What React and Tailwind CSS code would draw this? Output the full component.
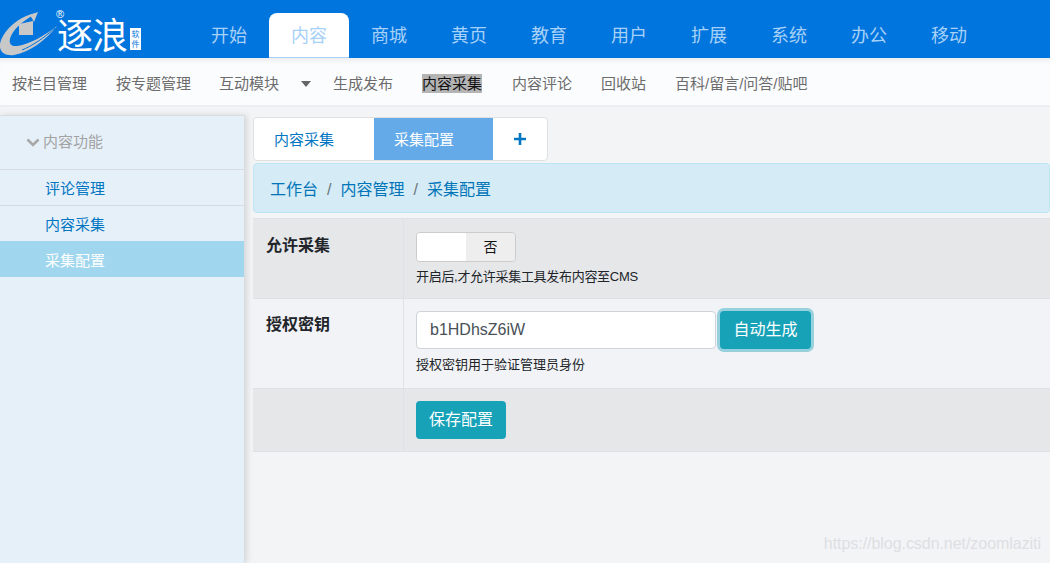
const topNav = ['开始', '内容', '商城', '黄页', '教育', '用户', '扩展', '系统', '办公', '移动'];

const subNav = [
  { label: '按栏目管理', w: 'w-[104px]' },
  { label: '按专题管理', w: 'w-[103px]' },
  { label: '互动模块', w: 'w-[82px]' },
  { caret: true, w: 'w-[32px]' },
  { label: '生成发布', w: 'w-[89px]' },
  { label: '内容采集', w: 'w-[90px]', selected: true },
  { label: '内容评论', w: 'w-[89px]' },
  { label: '回收站', w: 'w-[74px]' },
  { label: '百科/留言/问答/贴吧', w: 'w-[150px]' },
];

function Logo() {
  return (
    <div className="relative flex h-[58px] w-[149px] shrink-0 items-start">
      <svg width="58" height="58" viewBox="0 0 58 58" className="shrink-0">
        <path d="M37 13 C20 15 3 30 0 44 C-1 53 6 56 14 55 C30 52 46 40 57 26 C44 36 28 45 17 46 C9 47 8 41 12 34 C16 27 24 20 37 13 Z" fill="#c8c8c8" />
        <path d="M19 24 L33 21 L33 35 L19 35 Z" fill="#c8c8c8" />
        <path d="M22 50 C32 46 44 38 55 28" fill="none" stroke="#0075de" strokeWidth="1" />
        <path d="M30 15 L38 12 L34 22 Z" fill="#c8c8c8" />
      </svg>
      <span className="ml-[-1px] mt-[18px] text-[36px] leading-[30px] tracking-[-1px] text-white font-['Noto_Sans_CJK_SC',sans-serif]">逐浪</span>
      <span className="absolute left-[130px] top-[28px] flex h-[22px] w-[11px] flex-col items-center justify-center bg-white text-[8px] leading-[10px] text-[#0075de] font-['Noto_Sans_CJK_SC',sans-serif]">
        <span>软</span>
        <span>件</span>
      </span>
      <span className="absolute left-[56px] top-[9px] text-[11px] leading-[11px] text-white font-['Liberation_Sans',sans-serif]">®</span>
    </div>
  );
}

function App() {
  return (
    <div className="relative flex h-[563px] w-[1050px] flex-col overflow-hidden bg-[#f3f4f6] font-['Liberation_Sans','Noto_Sans_CJK_SC',sans-serif]">
      <header className="flex h-[58px] shrink-0 bg-[#0075de]">
        <Logo />
        <nav className="flex items-end pl-[40px]">
          {topNav.map((item) => (
            <a
              key={item}
              className={`flex h-[45px] w-[80px] items-center justify-center rounded-t-[8px] pt-[2px] text-[18px] text-[#a8d1f7] ${item === '内容' ? 'border-b border-[#a8d1f7] bg-white' : ''}`}
            >
              {item}
            </a>
          ))}
        </nav>
      </header>

      <div className="flex h-[49px] shrink-0 items-center border-b-2 border-[#eceef1] bg-[#fbfcfe] pl-[12px] pt-[5px] text-[15px] text-[#6c6c6c] shadow-[inset_0_6px_6px_-4px_rgba(0,0,0,0.08)]">
        {subNav.map((item, i) => (
          <div key={i} className={`${item.w} shrink-0`}>
            {item.caret ? (
              <span className="block h-0 w-0 border-x-[5px] border-t-[6px] border-x-transparent border-t-[#666]" />
            ) : item.selected ? (
              <span className="bg-[#b4b4b4] py-[1px] text-[#111]">{item.label}</span>
            ) : (
              item.label
            )}
          </div>
        ))}
      </div>

      <div className="flex min-h-0 flex-1">
        <aside className="mt-[8px] w-[245px] shrink-0 border-t border-r border-[#d9dde2] bg-[#e6f0f9] shadow-[2px_0_6px_rgba(0,0,0,0.12)]">
          <div className="flex h-[54px] items-center border-b border-[#d5dbe1] pl-[25px] text-[15px] text-[#a3a3a3]">
            <svg width="16" height="16" viewBox="0 0 16 16" className="mr-[2px]">
              <path d="M2.5 4.5 L8 10 L13.5 4.5" fill="none" stroke="#a8a8a8" strokeWidth="2.6" />
            </svg>
            内容功能
          </div>
          <div className="flex h-[36px] items-center border-b border-[#d5dbe1] pl-[45px] pt-[3px] text-[15px] text-[#0075c2]">评论管理</div>
          <div className="flex h-[35px] items-center pl-[45px] pt-[3px] text-[15px] text-[#0075c2]">内容采集</div>
          <div className="flex h-[36px] items-center bg-[#a1d7ee] pl-[45px] pt-[4px] text-[15px] text-white">采集配置</div>
        </aside>

        <main className="min-w-0 flex-1 pl-[8px] pt-[10px]">
          <div className="flex h-[44px] w-[295px] overflow-hidden rounded-[4px] border border-[#e0e0e0] bg-white text-[15px]">
            <div className="flex w-[120px] items-center pl-[20px] pt-[2px] text-[#0075c2]">内容采集</div>
            <div className="flex w-[119px] items-center bg-[#64aae9] pl-[20px] pt-[2px] text-white">采集配置</div>
            <div className="flex flex-1 items-center justify-center">
              <svg width="14" height="14" viewBox="0 0 14 14">
                <path d="M7 1 V13 M1 7 H13" stroke="#0075c2" strokeWidth="2.6" />
              </svg>
            </div>
          </div>

          <div className="mt-[2px] flex h-[50px] items-center rounded-[4px] border border-[#bee5f2] bg-[#d5ebf5] pl-[16px] pt-[4px] text-[16px] text-[#0075b8]">
            工作台
            <span className="mx-[9px] text-[#6c757d]">/</span>
            内容管理
            <span className="mx-[9px] text-[#6c757d]">/</span>
            采集配置
          </div>

          <div className="mt-[5px] border-t border-[#dee2e6] text-[#212529]">
            <div className="flex h-[80px] border-b border-[#dee2e6] bg-[#e6e7e9]">
              <div className="w-[151px] border-r border-[#dee2e6] pl-[13px] pt-[15px] text-[16px] font-bold">允许采集</div>
              <div className="pl-[12px] pt-[13px]">
                <div className="flex h-[30px] w-[100px] overflow-hidden rounded-[4px] border border-[#ccc] text-[14px] text-[#111]">
                  <div className="w-1/2 bg-white" />
                  <div className="flex w-1/2 items-center justify-center bg-[#eee]">否</div>
                </div>
                <p className="mt-[6px] text-[13px] leading-[18px] tracking-[-0.3px]">开启后,才允许采集工具发布内容至CMS</p>
              </div>
            </div>

            <div className="flex h-[90px] border-b border-[#dee2e6] bg-[#f2f3f6]">
              <div className="w-[151px] border-r border-[#dee2e6] pl-[13px] pt-[14px] text-[16px] font-bold">授权密钥</div>
              <div className="pl-[12px] pt-[12px]">
                <div className="flex items-center">
                  <input
                    readOnly
                    value="b1HDhsZ6iW"
                    className="h-[38px] w-[300px] rounded-[4px] border border-[#ced4da] bg-white px-[13px] text-[16px] text-[#495057]"
                  />
                  <button className="ml-[4px] h-[38px] w-[91px] rounded-[4px] bg-[#17a2b8] text-[16px] text-white shadow-[0_0_0_3px_rgba(58,176,195,0.5)]">
                    自动生成
                  </button>
                </div>
                <p className="mt-[7px] text-[13px] leading-[18px]">授权密钥用于验证管理员身份</p>
              </div>
            </div>

            <div className="flex h-[63px] border-b border-[#dee2e6] bg-[#e6e7e9]">
              <div className="w-[151px] border-r border-[#dee2e6]" />
              <div className="pl-[12px] pt-[12px]">
                <button className="h-[38px] w-[90px] rounded-[4px] bg-[#17a2b8] text-[16px] text-white">保存配置</button>
              </div>
            </div>
          </div>
        </main>
      </div>

      <span className="absolute bottom-[7px] right-[9px] text-[16px] tracking-[-0.05px] text-[#dddfe3]">https://blog.csdn.net/zoomlaziti</span>
    </div>
  );
}

export default App;
